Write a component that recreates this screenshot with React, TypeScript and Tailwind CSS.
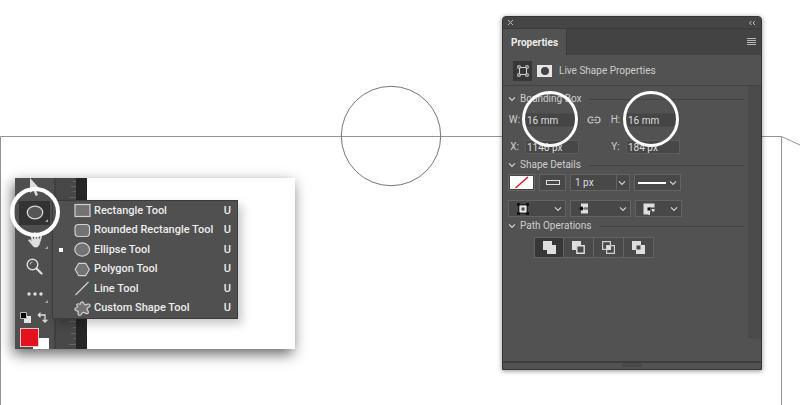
import type { ReactNode } from "react";

const menuItems: { name: string; icon: ReactNode; current?: boolean }[] = [
  { name: "Rectangle Tool", icon: <rect x="1" y="1.500" width="15" height="12" /> },
  { name: "Rounded Rectangle Tool", icon: <rect x="1" y="1.500" width="14.500" height="12" rx="3.500" /> },
  { name: "Ellipse Tool", icon: <ellipse cx="8.200" cy="7.500" rx="7.400" ry="6.600" />, current: true },
  { name: "Polygon Tool", icon: <path d="M4.700 1.300h7L15.300 7.500l-3.600 6.200h-7L1.200 7.500z" /> },
  { name: "Line Tool", icon: <path d="M1.500 14L14.500 1" /> },
  {
    name: "Custom Shape Tool",
    icon: (
      <path d="M6.200 3.200C6.600 1 8.600.3 9.600 1.800c.6 1.200.6 2.200 1.800 2.100 1.500-.2 2.600-1.500 4-.7 1.500 1.200.2 2.800-1.500 3.400-1.300.6-1.200 1.600-.3 2.700 1.200 1.500 1 3.400-.8 3.300-1.700-.2-2.600-1.600-3.800-1.200-1.300.4-1.600 2.900-3.300 3-1.800 0-2-1.700-1.400-3.200.3-1-.4-1.200-1.400-1.400C1.200 9.500.5 8.300 1.300 7.300c.7-.9 2-.8 2.400-1.500.2-.6-1.200-1-1-2.100.3-1.300 2-1 3.500-.5z" />
    ),
  },
];

function CornerMark() {
  return <span className="absolute right-[6px] bottom-1 h-[3px] w-[3px] bg-[#a8a8a8] [clip-path:polygon(100%_0,100%_100%,0_100%)]" />;
}

function Tool({ label, children }: { label: string; children: ReactNode }) {
  return (
    <button aria-label={label} className="relative flex h-[27px] w-full items-center justify-center">
      {children}
    </button>
  );
}

function ToolsWindow() {
  return (
    <section
      aria-label="Tools"
      className="relative mt-[162px] flex h-[171px] w-[280px] bg-white shadow-[-2px_5px_13px_rgba(0,0,0,0.6)]"
    >
      <div className="flex w-[39px] flex-col bg-[#4f4f4f]">
        <button aria-label="Path Selection Tool" className="relative flex h-[21px] w-full justify-center">
          <svg width="13" height="18" viewBox="0 0 13 18" fill="#dedede">
            <path d="M2 0l10 11-4.500.3L10 17l-2.300 1L5.300 12.200 2 15z" />
          </svg>
          <CornerMark />
        </button>
        <Tool label="Ellipse Tool">
          <span className="relative flex h-6 w-[31px] items-center justify-center bg-[#333]">
            <svg width="18" height="15" viewBox="0 0 18 15" fill="#555" stroke="#d8d8d8" strokeWidth="1.300">
              <ellipse cx="9" cy="7.500" rx="7.700" ry="6.300" />
            </svg>
          </span>
          <CornerMark />
          <span className="pointer-events-none absolute -top-[12px] -left-[5px] z-20 h-[50px] w-[50px] rounded-full border-4 border-white" />
        </Tool>
        <Tool label="Hand Tool">
          <svg width="16" height="17" viewBox="0 0 16 17" fill="none" stroke="#dedede" strokeLinecap="round">
            <path d="M5.500 9L4.300 3.500M8 8V2M10.500 8.500L11.300 3M12.800 9.500L14.200 5.500" strokeWidth="1.800" />
            <path d="M5 8h8.500l-1 5-2 3H7L4 12.500 1.300 9.300c.6-1 1.700-.7 2.700.2l1 .8z" fill="#dedede" strokeWidth=".6" />
          </svg>
          <CornerMark />
        </Tool>
        <Tool label="Zoom Tool">
          <svg width="17" height="17" viewBox="0 0 17 17" fill="none" stroke="#dcdcdc">
            <circle cx="6.500" cy="6.500" r="5.300" strokeWidth="1.400" />
            <path d="M4 6.500A2.700 2.700 0 016.500 4" strokeWidth=".8" />
            <path d="M10.500 10.500l5 5" strokeWidth="2.200" strokeLinecap="round" />
          </svg>
        </Tool>
        <Tool label="Edit Toolbar">
          <svg width="16" height="4" viewBox="0 0 16 4" fill="#dedede">
            <circle cx="2" cy="2" r="1.700" />
            <circle cx="8" cy="2" r="1.700" />
            <circle cx="14" cy="2" r="1.700" />
          </svg>
          <CornerMark />
        </Tool>
        <div className="flex h-5 items-center justify-between pr-[6px] pl-[5px]">
          <button aria-label="Default Colors">
            <svg width="11" height="11" viewBox="0 0 11 11">
              <path d="M4 4h7v7H4z" fill="#e4e4e4" />
              <path d="M.5.500h6v6h-6z" fill="#000" stroke="#bbb" />
            </svg>
          </button>
          <button aria-label="Switch Colors">
            <svg width="11" height="11" viewBox="0 0 11 11" fill="none" stroke="#dedede" strokeWidth="1.300">
              <path d="M1.500 3H8v6.500M3.500.8L1.300 3l2.200 2.200M5.700 7.700L8 10l2.300-2.300" />
            </svg>
          </button>
        </div>
        <div className="grid h-[22px] grid-cols-[13px_6px_10px] grid-rows-[10px_9px_2px] overflow-hidden pt-[1px] pl-[5px]">
          <button aria-label="Background Color" className="col-start-2 col-end-4 row-start-2 row-end-4 bg-white" />
          <button
            aria-label="Foreground Color"
            className="z-10 col-start-1 col-end-3 row-start-1 row-end-3 border border-[#f1c9c9] bg-[#e2131f]"
          />
        </div>
      </div>
      <div className="flex w-[22px] flex-col items-end justify-between border-l-2 border-[#404040] bg-[#484848]">
        <svg width="8" height="22" viewBox="0 0 8 22" stroke="#666">
          <path d="M5 3.500h3M3 8.500h5M5 13.500h3M1 19.500h7" />
        </svg>
        <svg width="8" height="30" viewBox="0 0 8 30" stroke="#666">
          <path d="M1 2.500h7M5 8.500h3M3 14.500h5M5 19.500h3M1 25.500h7" />
        </svg>
      </div>
      <div className="w-[11px] bg-[#262626]" />

      <ul
        role="menu"
        className="absolute top-[22px] left-[37px] flex w-[186px] flex-col border border-[#3b3b3b] bg-[#505050] shadow-[4px_5px_9px_rgba(0,0,0,0.22)]"
      >
        {menuItems.map((item, index) => (
          <li key={item.name} role="none" className={index % 2 ? "h-5" : "h-[19px]"}>
            <button
              role="menuitem"
              className="flex h-full w-full items-center pr-[6px] pl-[6px] font-[Roboto,sans-serif] text-[11px] leading-4 font-medium text-[#ececec]"
            >
              <span className={"h-1 w-1 " + (item.current ? "bg-white" : "")} />
              <svg
                className="mr-[3px] ml-[11px]"
                width="17"
                height="15"
                viewBox="0 0 17 15"
                fill="#737373"
                stroke="#d0d0d0"
                strokeWidth="1.200"
              >
                {item.icon}
              </svg>
              <span className="whitespace-nowrap">{item.name}</span>
              <span className="ml-auto">U</span>
            </button>
          </li>
        ))}
      </ul>
    </section>
  );
}

function Chevron() {
  return (
    <svg className="shrink-0" width="8" height="6" viewBox="0 0 8 6" fill="none" stroke="#d2d2d2" strokeWidth="1.200">
      <path d="M1 1.300l3 3 3-3" />
    </svg>
  );
}

function SectionTitle({ children }: { children: ReactNode }) {
  return (
    <h2 className="flex h-4 items-center gap-1 pr-1 pl-[5px] leading-4">
      <Chevron />
      <span className="whitespace-nowrap">{children}</span>
      <span className="ml-1 h-px flex-1 bg-[#424242]" />
    </h2>
  );
}

function Field({ id, label, value, ringed }: { id: string; label: string; value: string; ringed?: boolean }) {
  return (
    <div className="flex items-center">
      <label htmlFor={id} className="w-[13px] text-center">
        {label}
      </label>
      <span className="relative ml-1 flex">
        <input
          id={id}
          defaultValue={value}
          className={
            "h-[14px] w-[54px] border px-[1px] text-[10px] leading-3 text-[#dedede] outline-none " +
            (ringed ? "border-[#4b4b4b] bg-[#454545]" : "border-[#5c5c5c] bg-[#474747]")
          }
        />
        {ringed && (
          <span className="pointer-events-none absolute -top-[22px] -left-[3px] z-10 h-14 w-14 rounded-full border-3 border-white" />
        )}
      </span>
    </div>
  );
}

function DropDown({ label, text, width, children }: { label: string; text?: string; width: string; children?: ReactNode }) {
  return (
    <span className={"relative flex h-[17px] items-center border border-[#636363] bg-[#484848] " + width}>
      <select
        aria-label={label}
        className="h-full w-full appearance-none bg-transparent pl-1 text-[10px] leading-3 text-[#dedede] outline-none"
      >
        {text ? <option>{text}</option> : <option aria-label={label} />}
      </select>
      <span className="pointer-events-none absolute inset-0 flex items-center justify-between pr-[3px]">
        {children}
        <Chevron />
      </span>
    </span>
  );
}

const operations: { name: string; icon: ReactNode }[] = [
  { name: "Combine Shapes", icon: <path d="M0 0h9v4h4v9H4V9H0z" fill="#dedede" /> },
  {
    name: "Subtract Front Shape",
    icon: (
      <>
        <path d="M0 0h9v4H4v5H0z" fill="#dedede" />
        <path d="M4.800 4.800h7.400v7.400H4.800z" fill="none" stroke="#dedede" strokeWidth="1.400" />
      </>
    ),
  },
  {
    name: "Intersect Shape Areas",
    icon: (
      <>
        <path d="M.6.600h7.800v7.800H.6zM4.600 4.600h7.800v7.800H4.600z" fill="none" stroke="#cfcfcf" strokeWidth="1.200" />
        <path d="M5 5h4v4H5z" fill="#dedede" />
      </>
    ),
  },
  {
    name: "Exclude Overlapping Shapes",
    icon: <path d="M0 0h9v4h4v9H4V9H0zM4.500 4.500v4h4v-4z" fill="#dedede" fillRule="evenodd" />,
  },
];

function PropertiesPanel() {
  return (
    <section
      aria-label="Properties"
      className="relative flex h-[354px] w-[260px] flex-col rounded-t border border-[#363636] bg-[#525252] font-[Roboto,sans-serif] text-[10px] leading-[14px] text-[#cdcdcd] shadow-[0_1px_5px_rgba(0,0,0,0.45)]"
    >
      <div className="flex h-3 items-center justify-between rounded-t-[3px] border-b border-[#3b3b3b] bg-[#454545] px-1">
        <button aria-label="Close">
          <svg width="7" height="7" viewBox="0 0 7 7" stroke="#bdbdbd">
            <path d="M1 1l5 5M6 1L1 6" />
          </svg>
        </button>
        <button aria-label="Collapse" className="mr-[1px]">
          <svg width="8" height="6" viewBox="0 0 8 6" fill="none" stroke="#bdbdbd">
            <path d="M3.500 1l-2 2 2 2M7 1L5 3l2 2" />
          </svg>
        </button>
      </div>
      <div className="flex h-[26px] items-stretch justify-between bg-[#434343]">
        <button
          role="tab"
          aria-selected="true"
          className="w-16 border-r border-[#3b3b3b] bg-[#525252] pt-[1px] text-center font-bold text-[#ececec]"
        >
          Properties
        </button>
        <button aria-label="Panel menu" className="mr-[5px]">
          <svg width="9" height="8" viewBox="0 0 9 8" stroke="#b5b5b5">
            <path d="M0 .5h9M0 2.500h9M0 4.500h9M0 6.500h9" />
          </svg>
        </button>
      </div>
      <div className="flex h-[31px] items-center border-b border-[#424242] pt-[1px] pl-[10px]">
        <button aria-label="Shape" className="flex h-5 w-[19px] items-center justify-center bg-[#373737]">
          <svg width="12" height="12" viewBox="0 0 12 12" fill="none" stroke="#d4d4d4">
            <path d="M2.500 2.500h7v7h-7z" />
            <path d="M.8.800h2.400v2.400H.8zM8.800.800h2.400v2.400H8.800zM.8 8.800h2.400v2.400H.8zM8.800 8.800h2.400v2.400H8.800z" fill="#373737" />
          </svg>
        </button>
        <button aria-label="Mask" className="ml-[5px] flex h-3 w-[15px] items-center justify-center bg-[#e6e6e6]">
          <span className="h-2 w-2 rounded-full bg-[#444]" />
        </button>
        <h1 className="ml-[7px] whitespace-nowrap">Live Shape Properties</h1>
      </div>

      <div className="flex flex-1">
        <div className="flex-1 pt-[5px]">
          <SectionTitle>Bounding Box</SectionTitle>
          <div className="mt-[6px] flex h-[14px] items-center pl-[5px]">
            <Field id="shape-w" label="W:" value="16 mm" ringed />
            <button aria-label="Link width and height" className="mx-2">
              <svg width="14" height="8" viewBox="0 0 14 8" fill="none" stroke="#cdcdcd" strokeWidth="1.200">
                <path d="M6 2C5.500 1.200 5 1 4 1a3 3 0 000 6c1 0 1.500-.2 2-1M8 2c.5-.8 1-1 2-1a3 3 0 010 6c-1 0-1.500-.2-2-1M4 4h6" />
              </svg>
            </button>
            <Field id="shape-h" label="H:" value="16 mm" ringed />
          </div>
          <div className="mt-[13px] flex h-[14px] items-center gap-[30px] pl-[5px]">
            <Field id="shape-x" label="X:" value="1146 px" />
            <Field id="shape-y" label="Y:" value="184 px" />
          </div>

          <div className="mt-[3px]">
            <SectionTitle>Shape Details</SectionTitle>
          </div>
          <div className="mt-[1px] flex gap-1 pl-[5px]">
            <button aria-label="Fill" className="flex h-[17px] w-[27px] items-center justify-center border border-[#666] bg-[#444]">
              <svg width="23" height="13" viewBox="0 0 23 13">
                <path d="M0 0h23v13H0z" fill="#fff" />
                <path d="M5.500 12L18 1" stroke="#d3202b" strokeWidth="1.600" />
              </svg>
            </button>
            <button aria-label="Stroke" className="flex h-[17px] w-[27px] items-center justify-center border border-[#636363] bg-[#484848]">
              <span className="h-[5px] w-[14px] border border-[#dedede]" />
            </button>
            <DropDown label="Stroke width" text="1 px" width="w-[60px]">
              <span className="ml-[45px] h-full w-px bg-[#636363]" />
            </DropDown>
            <DropDown label="Stroke type" width="w-[47px]">
              <span className="ml-[3px] h-[2px] w-7 bg-white" />
            </DropDown>
          </div>
          <div className="mt-[9px] flex gap-1 pl-[5px]">
            <DropDown label="Stroke alignment" width="w-[58px]">
              <svg className="ml-2" width="12" height="12" viewBox="0 0 12 12">
                <path d="M1.500 1.500h9v9h-9z" fill="none" stroke="#222" />
                <path d="M0 0h3v3H0zM9 0h3v3H9zM0 9h3v3H0zM9 9h3v3H9z" fill="#111" />
                <path d="M3.500 3.500h5v5h-5z" fill="#484848" stroke="#e6e6e6" strokeWidth="2" />
              </svg>
            </DropDown>
            <DropDown label="Stroke caps" width="w-[61px]">
              <svg className="ml-2" width="11" height="11" viewBox="0 0 11 11">
                <path d="M2 .5h7v4H5v2h4v4H2V7.500h2v-4H2z" fill="#dedede" />
                <path d="M4 5.500h5" stroke="#777" />
                <path d="M.5 4h3.500v3H.5z" fill="#111" />
              </svg>
            </DropDown>
            <DropDown label="Stroke corners" width="w-[47px]">
              <svg className="ml-[7px]" width="12" height="12" viewBox="0 0 12 12">
                <path d="M.5.500h11v4H6v1h5.500v3H9v-2H6v5H.5z" fill="#dedede" />
                <path d="M6.500 7v5" stroke="#dedede" strokeWidth="2" />
                <path d="M7.500 8.500V12M8 5.500h3.500" stroke="#444" />
                <path d="M4.500 4.500h3v3h-3z" fill="#111" />
              </svg>
            </DropDown>
          </div>

          <div className="mt-[1px]">
            <SectionTitle>Path Operations</SectionTitle>
          </div>
          <div className="mt-[3px] flex pl-[31px]">
            {operations.map((op, index) => (
              <button
                key={op.name}
                aria-label={op.name}
                className={
                  "flex h-[21px] w-[30px] items-center justify-center border-y border-r border-[#636363] " +
                  (index === 0 ? "border-l bg-[#373737]" : "bg-[#4a4a4a]")
                }
              >
                <svg width="13" height="13" viewBox="0 0 13 13">
                  {op.icon}
                </svg>
              </button>
            ))}
          </div>
        </div>
        <div className="mb-[22px] w-[13px] bg-[#4b4b4b]" />
      </div>
      <div className="flex h-2 justify-center border-t-2 border-[#3d3d3d]">
        <span className="h-1 w-5 bg-[#494949]" />
      </div>
    </section>
  );
}

export default function App() {
  return (
    <main className="relative flex min-h-screen items-start justify-between overflow-hidden bg-white pt-4 pr-[38px] pl-[15px]">
      <svg
        aria-hidden="true"
        className="pointer-events-none absolute top-0 left-0"
        width="800"
        height="405"
        viewBox="0 0 800 405"
        fill="none"
        stroke="#949494"
      >
        <path d="M.5 405V136.500H781.500V405M781.500 136.500L800 145" />
        <circle cx="391" cy="136" r="49.700" stroke="#777" />
      </svg>
      <ToolsWindow />
      <PropertiesPanel />
    </main>
  );
}
